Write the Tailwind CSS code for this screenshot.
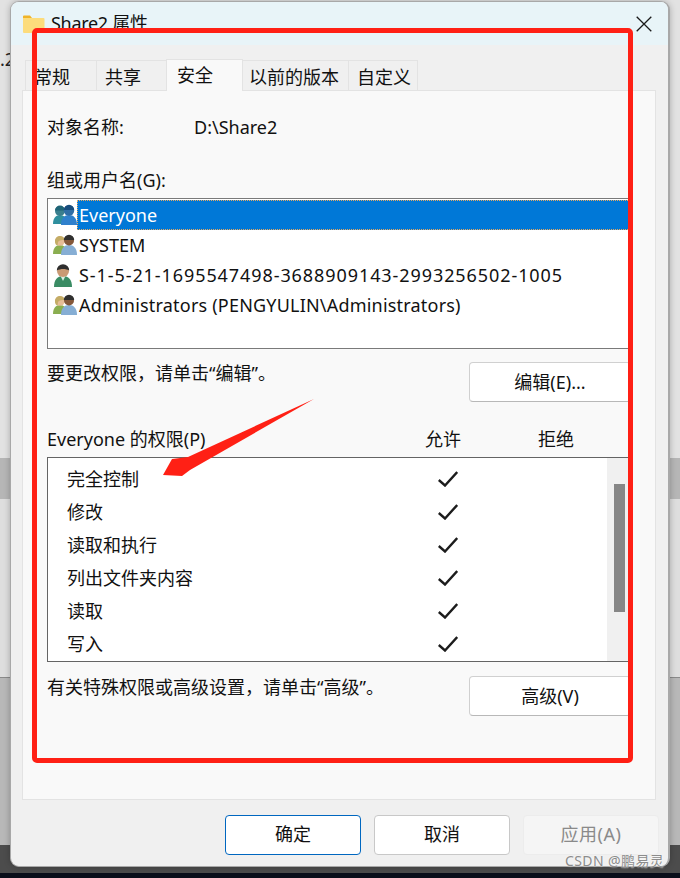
<!doctype html>
<html lang="zh-CN">
<head>
<meta charset="utf-8">
<script src="https://cdn.jsdelivr.net/npm/@tailwindcss/browser@4"></script>
</head>
<body>
<div class="relative w-[680px] h-[878px] overflow-hidden font-['Noto_Sans','Noto_Sans_CJK_SC',sans-serif] text-[18px] leading-[24px] text-[#111]">

  <!-- desktop behind the dialog -->
  <div class="h-[458px] bg-[#e2e2e2] pt-[47px] text-[#222]">.2</div>
  <div class="h-[41px] bg-[#b6b6b6]"></div>
  <div class="h-[179px] bg-[#dedede] border-b border-[#8a8a8a]"></div>
  <div class="h-[167px] bg-[#b8b8b8]"></div>
  <div class="h-[28px] bg-[#4c4c4c]"></div>
  <div class="h-[5px] bg-[#0a0e1a]"></div>

  <!-- dialog -->
  <div class="absolute left-[10px] top-[1px] w-[660px] h-[866px] flex flex-col rounded-[9px] overflow-hidden bg-[#f0f0f0] border border-[#a8a8a8] border-r-2 shadow-[0_0_6px_rgba(0,0,0,0.25)]">

    <!-- title bar -->
    <div class="h-[43px] shrink-0 bg-[#e8f4f8] flex items-center pl-[12px] pr-[16px]">
      <svg class="w-[22px] h-[20px] mr-[6px]" viewBox="0 0 22 20">
        <path d="M0 2.500a1 1 0 0 1 1-1h6l2 2.500H0z" fill="#f0b429"/>
        <path d="M0 4h20.500a1 1 0 0 1 1 1v13a1 1 0 0 1-1 1H1a1 1 0 0 1-1-1z" fill="#fcdc7c"/>
      </svg>
      <span class="-mt-[2px] tracking-[-0.3px]">Share2 属性</span>
      <svg class="ml-auto w-[16px] h-[16px]" viewBox="0 0 16 16" fill="none" stroke="#1a1a1a" stroke-width="1.300"><path d="M0.700 0.700 15.300 15.300M15.300 0.700 0.700 15.300"/></svg>
    </div>

    <!-- tabs -->
    <div class="flex items-end h-[45px] shrink-0 pl-[14px]">
      <div class="w-[71px] h-[30px] border-t border-l border-[#e3e3e3] flex items-center pl-[8px] pt-[2px]">常规</div>
      <div class="w-[70px] h-[30px] border-t border-l border-[#e3e3e3] flex items-center pl-[8px] pt-[2px]">共享</div>
      <div class="w-[77px] h-[32px] bg-[#f9f9f9] border-t border-x border-[#e3e3e3] flex items-center pl-[10px] pb-[2px] -mb-[1px] relative z-10">安全</div>
      <div class="w-[105px] h-[30px] border-t border-[#e3e3e3] flex items-center pl-[6px] pt-[2px]">以前的版本</div>
      <div class="w-[70px] h-[30px] border-t border-x border-[#e3e3e3] flex items-center pl-[8px] pt-[2px]">自定义</div>
    </div>

    <!-- security panel -->
    <div class="ml-[11px] w-[634px] h-[710px] shrink-0 bg-[#f9f9f9] border border-[#e3e3e3] pl-[24px] pr-[24px] pt-[24px]">
      <div class="flex">
        <span class="w-[147px]">对象名称:</span>
        <span>D:\Share2</span>
      </div>
      <div class="mt-[29px]">组或用户名(G):</div>

      <!-- users list -->
      <div class="mt-[6px] h-[151px] bg-white border border-[#7a7a7a] pt-[1px]">
        <div class="h-[30px] flex items-center">
          <svg class="w-[24px] h-[22px] ml-[5px] shrink-0" viewBox="0 0 24 22">
            <path d="M0 20c0-6 3-9 7-9s7 3 7 9z" fill="#2f8f9e"/><circle cx="7" cy="7" r="5" fill="#3a7f8e"/><path d="M2 6.500a5 5 0 0 1 10 0z" fill="#1f6476"/>
            <path d="M8 21c0-7 3.500-10 8-10s8 3 8 10z" fill="#2f80cc"/><circle cx="16" cy="6.500" r="5.200" fill="#2f6ea6"/><path d="M10.800 6a5.200 5.200 0 0 1 10.400 0z" fill="#174c7c"/>
          </svg>
          <span class="flex-1 h-[30px] bg-[#0078d7] text-white border border-dotted border-[#e8a860] flex items-center pl-[1px]">Everyone</span>
        </div>
        <div class="h-[30px] flex items-center">
          <svg class="w-[24px] h-[22px] ml-[5px] shrink-0" viewBox="0 0 24 22">
            <path d="M0 20c0-6 3-9 7-9s7 3 7 9z" fill="#8aae50"/><circle cx="7" cy="7" r="4.800" fill="#e6bd96"/><path d="M2 8a5 5 0 0 1 10-2c-3 0-6 0-7 2l-.5 3.500C3 11 2 9.500 2 8z" fill="#c4ac66"/>
            <path d="M8 21c0-7 3.500-10 8-10s8 3 8 10z" fill="#86aed4"/><circle cx="16" cy="6.500" r="5" fill="#84583a"/><path d="M10.800 6a5.200 5.200 0 0 1 10.400 0z" fill="#303030"/>
          </svg>
          <span class="pl-[2px]">SYSTEM</span>
        </div>
        <div class="h-[30px] flex items-center">
          <svg class="w-[24px] h-[24px] ml-[5px] shrink-0" viewBox="0 0 24 24">
            <path d="M1 24c0-7 3-11 9-11s9 4 9 11z" fill="#3a8c64"/><path d="M7.500 13l2.500 5 2.500-5z" fill="#d8efe2"/><circle cx="10" cy="8" r="6" fill="#c99a74"/><path d="M3.800 7.500a6.200 6.200 0 0 1 12.400 0c-3.500-2-8.500-2-12.400 0z" fill="#2e2e2e"/>
          </svg>
          <span class="pl-[2px] tracking-[0.92px]">S-1-5-21-1695547498-3688909143-2993256502-1005</span>
        </div>
        <div class="h-[30px] flex items-center">
          <svg class="w-[24px] h-[22px] ml-[5px] shrink-0" viewBox="0 0 24 22">
            <path d="M0 20c0-6 3-9 7-9s7 3 7 9z" fill="#8aae50"/><circle cx="7" cy="7" r="4.800" fill="#e6bd96"/><path d="M2 8a5 5 0 0 1 10-2c-3 0-6 0-7 2l-.5 3.500C3 11 2 9.500 2 8z" fill="#c4ac66"/>
            <path d="M8 21c0-7 3.500-10 8-10s8 3 8 10z" fill="#86aed4"/><circle cx="16" cy="6.500" r="5" fill="#84583a"/><path d="M10.800 6a5.200 5.200 0 0 1 10.400 0z" fill="#303030"/>
          </svg>
          <span class="pl-[2px] tracking-[0.2px]">Administrators (PENGYULIN\Administrators)</span>
        </div>
      </div>

      <div class="mt-[13px] flex justify-between items-start">
        <span class="-mt-[1px]">要更改权限，请单击“编辑”。</span>
        <button class="w-[162px] h-[40px] pb-[1px] bg-white border border-[#d0d0d0] border-b-[#b8b8b8] rounded-[4px]">编辑(E)...</button>
      </div>

      <!-- permissions -->
      <div class="mt-[25px] flex">
        <span class="w-[378px]">Everyone 的权限(P)</span>
        <span class="w-[113px]">允许</span>
        <span>拒绝</span>
      </div>
      <div class="mt-[6px] h-[205px] bg-white border border-[#646464] flex overflow-hidden">
        <div class="flex-1 pt-[4px] pl-[19px]">
          <div class="h-[33px] flex items-center"><span class="w-[371px]">完全控制</span><svg class="w-[20px] h-[16px]" viewBox="0 0 20 16" fill="none" stroke="#1c1c1c" stroke-width="2.400"><path d="M0.800 9 7 14.500 19.200 1"/></svg></div>
          <div class="h-[33px] flex items-center"><span class="w-[371px]">修改</span><svg class="w-[20px] h-[16px]" viewBox="0 0 20 16" fill="none" stroke="#1c1c1c" stroke-width="2.400"><path d="M0.800 9 7 14.500 19.200 1"/></svg></div>
          <div class="h-[33px] flex items-center"><span class="w-[371px]">读取和执行</span><svg class="w-[20px] h-[16px]" viewBox="0 0 20 16" fill="none" stroke="#1c1c1c" stroke-width="2.400"><path d="M0.800 9 7 14.500 19.200 1"/></svg></div>
          <div class="h-[33px] flex items-center"><span class="w-[371px]">列出文件夹内容</span><svg class="w-[20px] h-[16px]" viewBox="0 0 20 16" fill="none" stroke="#1c1c1c" stroke-width="2.400"><path d="M0.800 9 7 14.500 19.200 1"/></svg></div>
          <div class="h-[33px] flex items-center"><span class="w-[371px]">读取</span><svg class="w-[20px] h-[16px]" viewBox="0 0 20 16" fill="none" stroke="#1c1c1c" stroke-width="2.400"><path d="M0.800 9 7 14.500 19.200 1"/></svg></div>
          <div class="h-[33px] flex items-center"><span class="w-[371px]">写入</span><svg class="w-[20px] h-[16px]" viewBox="0 0 20 16" fill="none" stroke="#1c1c1c" stroke-width="2.400"><path d="M0.800 9 7 14.500 19.200 1"/></svg></div>
        </div>
        <div class="w-[23px] bg-[#f0f0f0] pt-[26px] pl-[7px]">
          <div class="w-[11px] h-[128px] bg-[#868686]"></div>
        </div>
      </div>
      <div class="mt-[14px] flex justify-between items-start">
        <span class="-mt-[1px]">有关特殊权限或高级设置，请单击“高级”。</span>
        <button class="w-[162px] h-[40px] pb-[1px] bg-white border border-[#d0d0d0] border-b-[#b8b8b8] rounded-[4px]">高级(V)</button>
      </div>
    </div>

    <!-- footer buttons -->
    <div class="mt-[15px] ml-[214px] flex gap-[13px]">
      <button class="w-[136px] h-[40px] pb-[2px] bg-white border border-[#0067c0] rounded-[4px]">确定</button>
      <button class="w-[136px] h-[40px] pb-[2px] bg-white border border-[#c8c8c8] rounded-[4px]">取消</button>
      <button class="w-[136px] h-[40px] pb-[2px] bg-[#f5f5f5] border border-[#ececec] rounded-[4px] text-[#8a8a8a] tracking-[0.5px]">应用(A)</button>
    </div>
  </div>

  <!-- red annotation over the screenshot -->
  <div class="absolute left-[32px] top-[28px] w-[601px] h-[735px] border-[5px] border-[#ff2015] rounded-[5px]"></div>
  <svg class="absolute left-0 top-0 w-[680px] h-[878px]" viewBox="0 0 680 878">
    <polygon points="314,399 188,457 172,459 163,475 182,476 190,470" fill="#ff2015"/>
  </svg>

  <!-- watermark -->
  <div class="absolute left-[565px] top-[851px] text-[14px] leading-[20px] tracking-[0.4px] text-[#8c8c8c] [text-shadow:0_0_2px_#fff]">CSDN @鹏易灵</div>
</div>
</body>
</html>
